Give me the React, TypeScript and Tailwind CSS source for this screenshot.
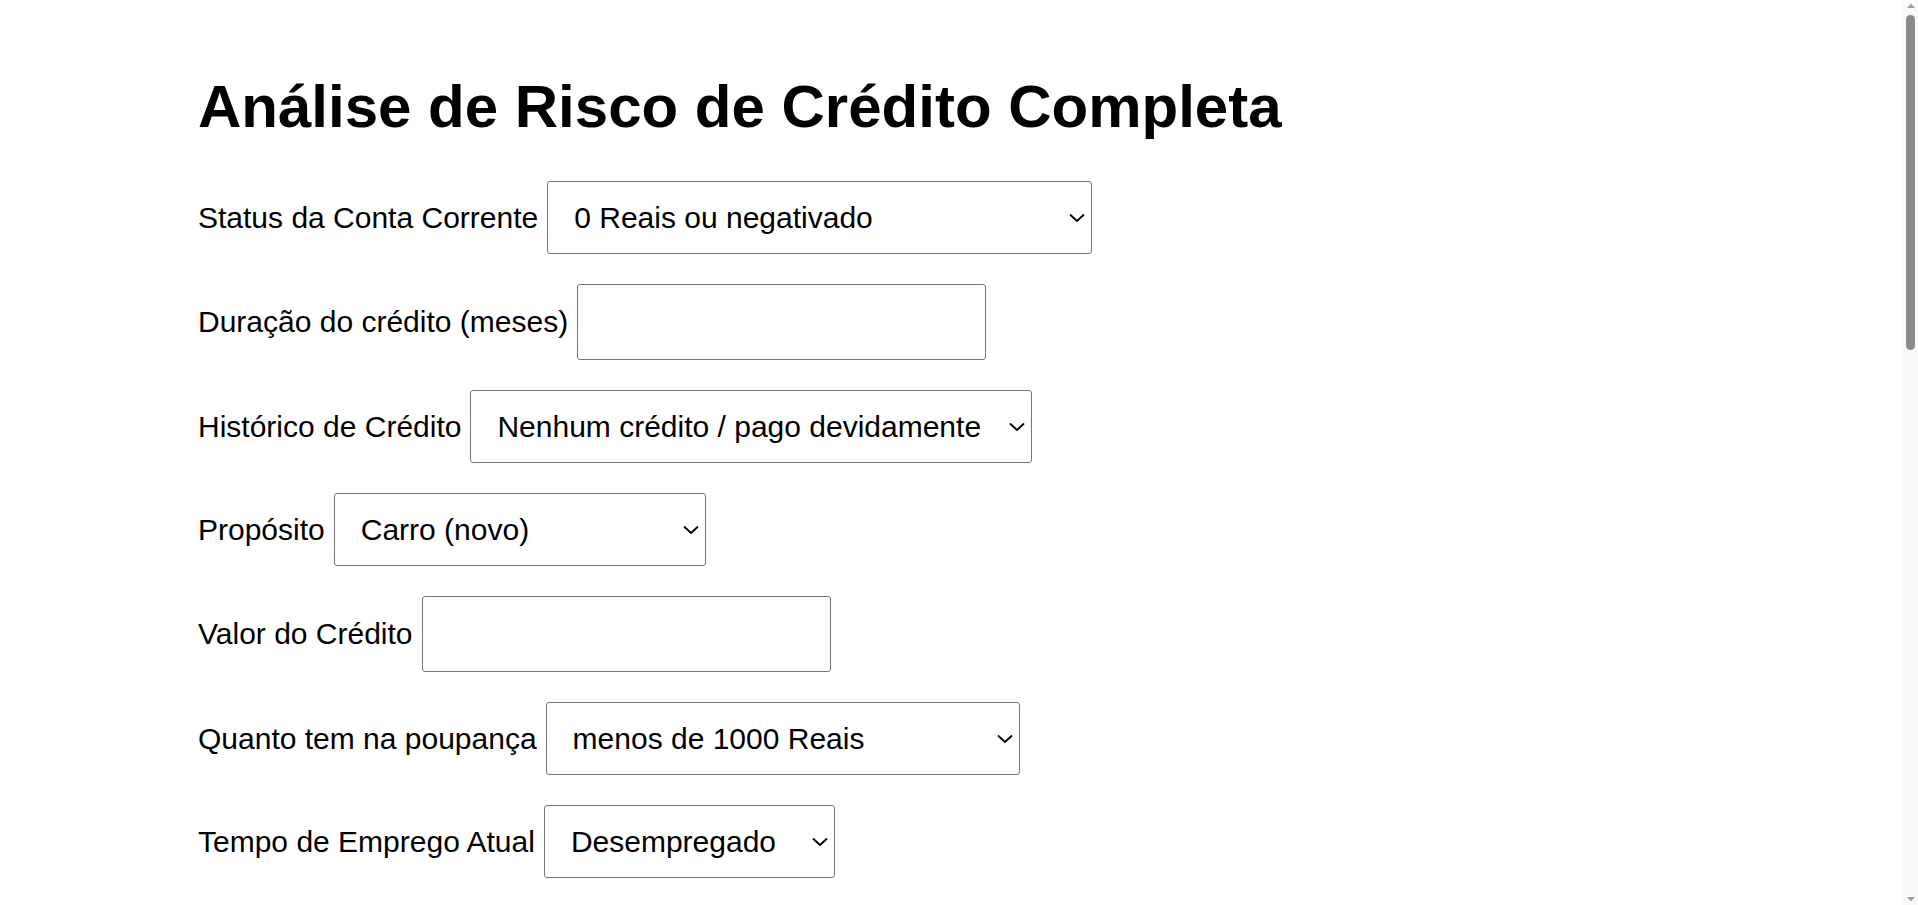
type Field =
  | { kind: "select"; label: string; value: string; options: string[]; width: string }
  | { kind: "input"; label: string };

const fields: Field[] = [
  {
    kind: "select",
    label: "Status da Conta Corrente",
    value: "0 Reais ou negativado",
    options: ["0 Reais ou negativado", "0 a 200 Reais", "200 Reais ou mais", "Sem conta corrente"],
    width: "w-[545px]",
  },
  { kind: "input", label: "Duração do crédito (meses)" },
  {
    kind: "select",
    label: "Histórico de Crédito",
    value: "Nenhum crédito / pago devidamente",
    options: [
      "Nenhum crédito / pago devidamente",
      "Todos os créditos pagos neste banco",
      "Créditos existentes pagos até agora",
      "Atraso no pagamento no passado",
      "Conta crítica / outros créditos",
    ],
    width: "w-[562px]",
  },
  {
    kind: "select",
    label: "Propósito",
    value: "Carro (novo)",
    options: ["Carro (novo)", "Carro (usado)", "Móveis / equipamentos", "Rádio / televisão", "Educação", "Negócios"],
    width: "w-[372px]",
  },
  { kind: "input", label: "Valor do Crédito" },
  {
    kind: "select",
    label: "Quanto tem na poupança",
    value: "menos de 1000 Reais",
    options: ["menos de 1000 Reais", "1000 a 5000 Reais", "5000 a 10000 Reais", "Sem poupança"],
    width: "w-[474px]",
  },
  {
    kind: "select",
    label: "Tempo de Emprego Atual",
    value: "Desempregado",
    options: ["Desempregado", "menos de 1 ano", "1 a 4 anos", "4 a 7 anos", "7 anos ou mais"],
    width: "w-[291px]",
  },
  { kind: "input", label: "Taxa de parcelamento (% da renda)" },
  {
    kind: "select",
    label: "Estado civil e sexo",
    value: "Masculino: divorciado / separado",
    options: ["Masculino: divorciado / separado", "Feminino: casada / divorciada", "Masculino: solteiro", "Masculino: casado / viúvo"],
    width: "w-[540px]",
  },
  {
    kind: "select",
    label: "Outros devedores / fiadores",
    value: "Nenhum",
    options: ["Nenhum", "Co-requerente", "Fiador"],
    width: "w-[280px]",
  },
  { kind: "input", label: "Tempo na residência atual" },
  {
    kind: "select",
    label: "Propriedade",
    value: "Imóvel",
    options: ["Imóvel", "Seguro de vida", "Carro ou outro", "Desconhecido / nenhum"],
    width: "w-[400px]",
  },
  { kind: "input", label: "Idade" },
  {
    kind: "select",
    label: "Outros planos de parcelamento",
    value: "Banco",
    options: ["Banco", "Lojas", "Nenhum"],
    width: "w-[200px]",
  },
  {
    kind: "select",
    label: "Moradia",
    value: "Aluguel",
    options: ["Aluguel", "Própria", "Gratuita"],
    width: "w-[220px]",
  },
  { kind: "input", label: "Número de créditos neste banco" },
  {
    kind: "select",
    label: "Emprego",
    value: "Desempregado / não qualificado",
    options: ["Desempregado / não qualificado", "Não qualificado - residente", "Qualificado", "Gerência / autônomo"],
    width: "w-[520px]",
  },
  { kind: "input", label: "Número de dependentes" },
  {
    kind: "select",
    label: "Telefone",
    value: "Nenhum",
    options: ["Nenhum", "Sim, registrado"],
    width: "w-[300px]",
  },
  {
    kind: "select",
    label: "Trabalhador estrangeiro",
    value: "Sim",
    options: ["Sim", "Não"],
    width: "w-[150px]",
  },
];

function Chevron() {
  return (
    <svg
      width="16"
      height="9"
      viewBox="0 0 16 9"
      fill="none"
      className="pointer-events-none absolute right-[7px] top-1/2 -translate-y-1/2"
    >
      <path d="M1.5 1.5 L8 7.5 L14.5 1.5" stroke="#000" strokeWidth="1.8" strokeLinecap="round" strokeLinejoin="round" />
    </svg>
  );
}

// page scrollbar as it shows in the browser window
function Scrollbar() {
  return (
    <aside className="flex h-full w-[15px] shrink-0 flex-col items-center bg-[#fafafa]">
      <svg width="10" height="9" viewBox="0 0 10 9" className="mt-[1px] shrink-0">
        <path d="M1 7 L5 2.5 L9 7 Z" fill="#a0a0a0" />
      </svg>
      <div className="mt-[5px] h-[335px] w-[9px] shrink-0 rounded-full bg-[#8b8b8b]" />
      <div className="flex-1" />
      <svg width="10" height="9" viewBox="0 0 10 9" className="mb-[1px] shrink-0">
        <path d="M1 2 L5 6.5 L9 2 Z" fill="#a0a0a0" />
      </svg>
    </aside>
  );
}

export default function App() {
  return (
    <div className="flex h-screen overflow-hidden bg-white font-['Liberation_Sans',Arial,sans-serif] text-black">
      <main className="min-w-0 flex-1 overflow-hidden pb-[60px] pl-[198px] pt-[72px]">
        <h1 className="mb-[40px] text-[60px] font-bold leading-[69px]">
          Análise de Risco de Crédito Completa
        </h1>

        <form className="flex flex-col gap-[30px]">
          {fields.map((f) => (
            <div key={f.label} className="flex items-center gap-[9px] text-[30px] leading-[34px]">
              <label>{f.label}</label>
              {f.kind === "select" ? (
                <div className="relative">
                  <select
                    defaultValue={f.value}
                    className={`h-[73px] appearance-none rounded-[3px] border border-[#767676] bg-white pl-[26px] text-[30px] ${f.width}`}
                  >
                    {f.options.map((o) => (
                      <option key={o}>{o}</option>
                    ))}
                  </select>
                  <Chevron />
                </div>
              ) : (
                <input
                  type="text"
                  className="h-[76px] w-[409px] rounded-[3px] border border-[#767676] bg-white px-[10px] text-[30px]"
                />
              )}
            </div>
          ))}

          <div>
            <button
              type="button"
              className="rounded-[3px] border border-[#767676] bg-[#efefef] px-[20px] py-[10px] text-[30px]"
            >
              Analisar Risco
            </button>
          </div>
        </form>
      </main>
      <Scrollbar />
    </div>
  );
}
